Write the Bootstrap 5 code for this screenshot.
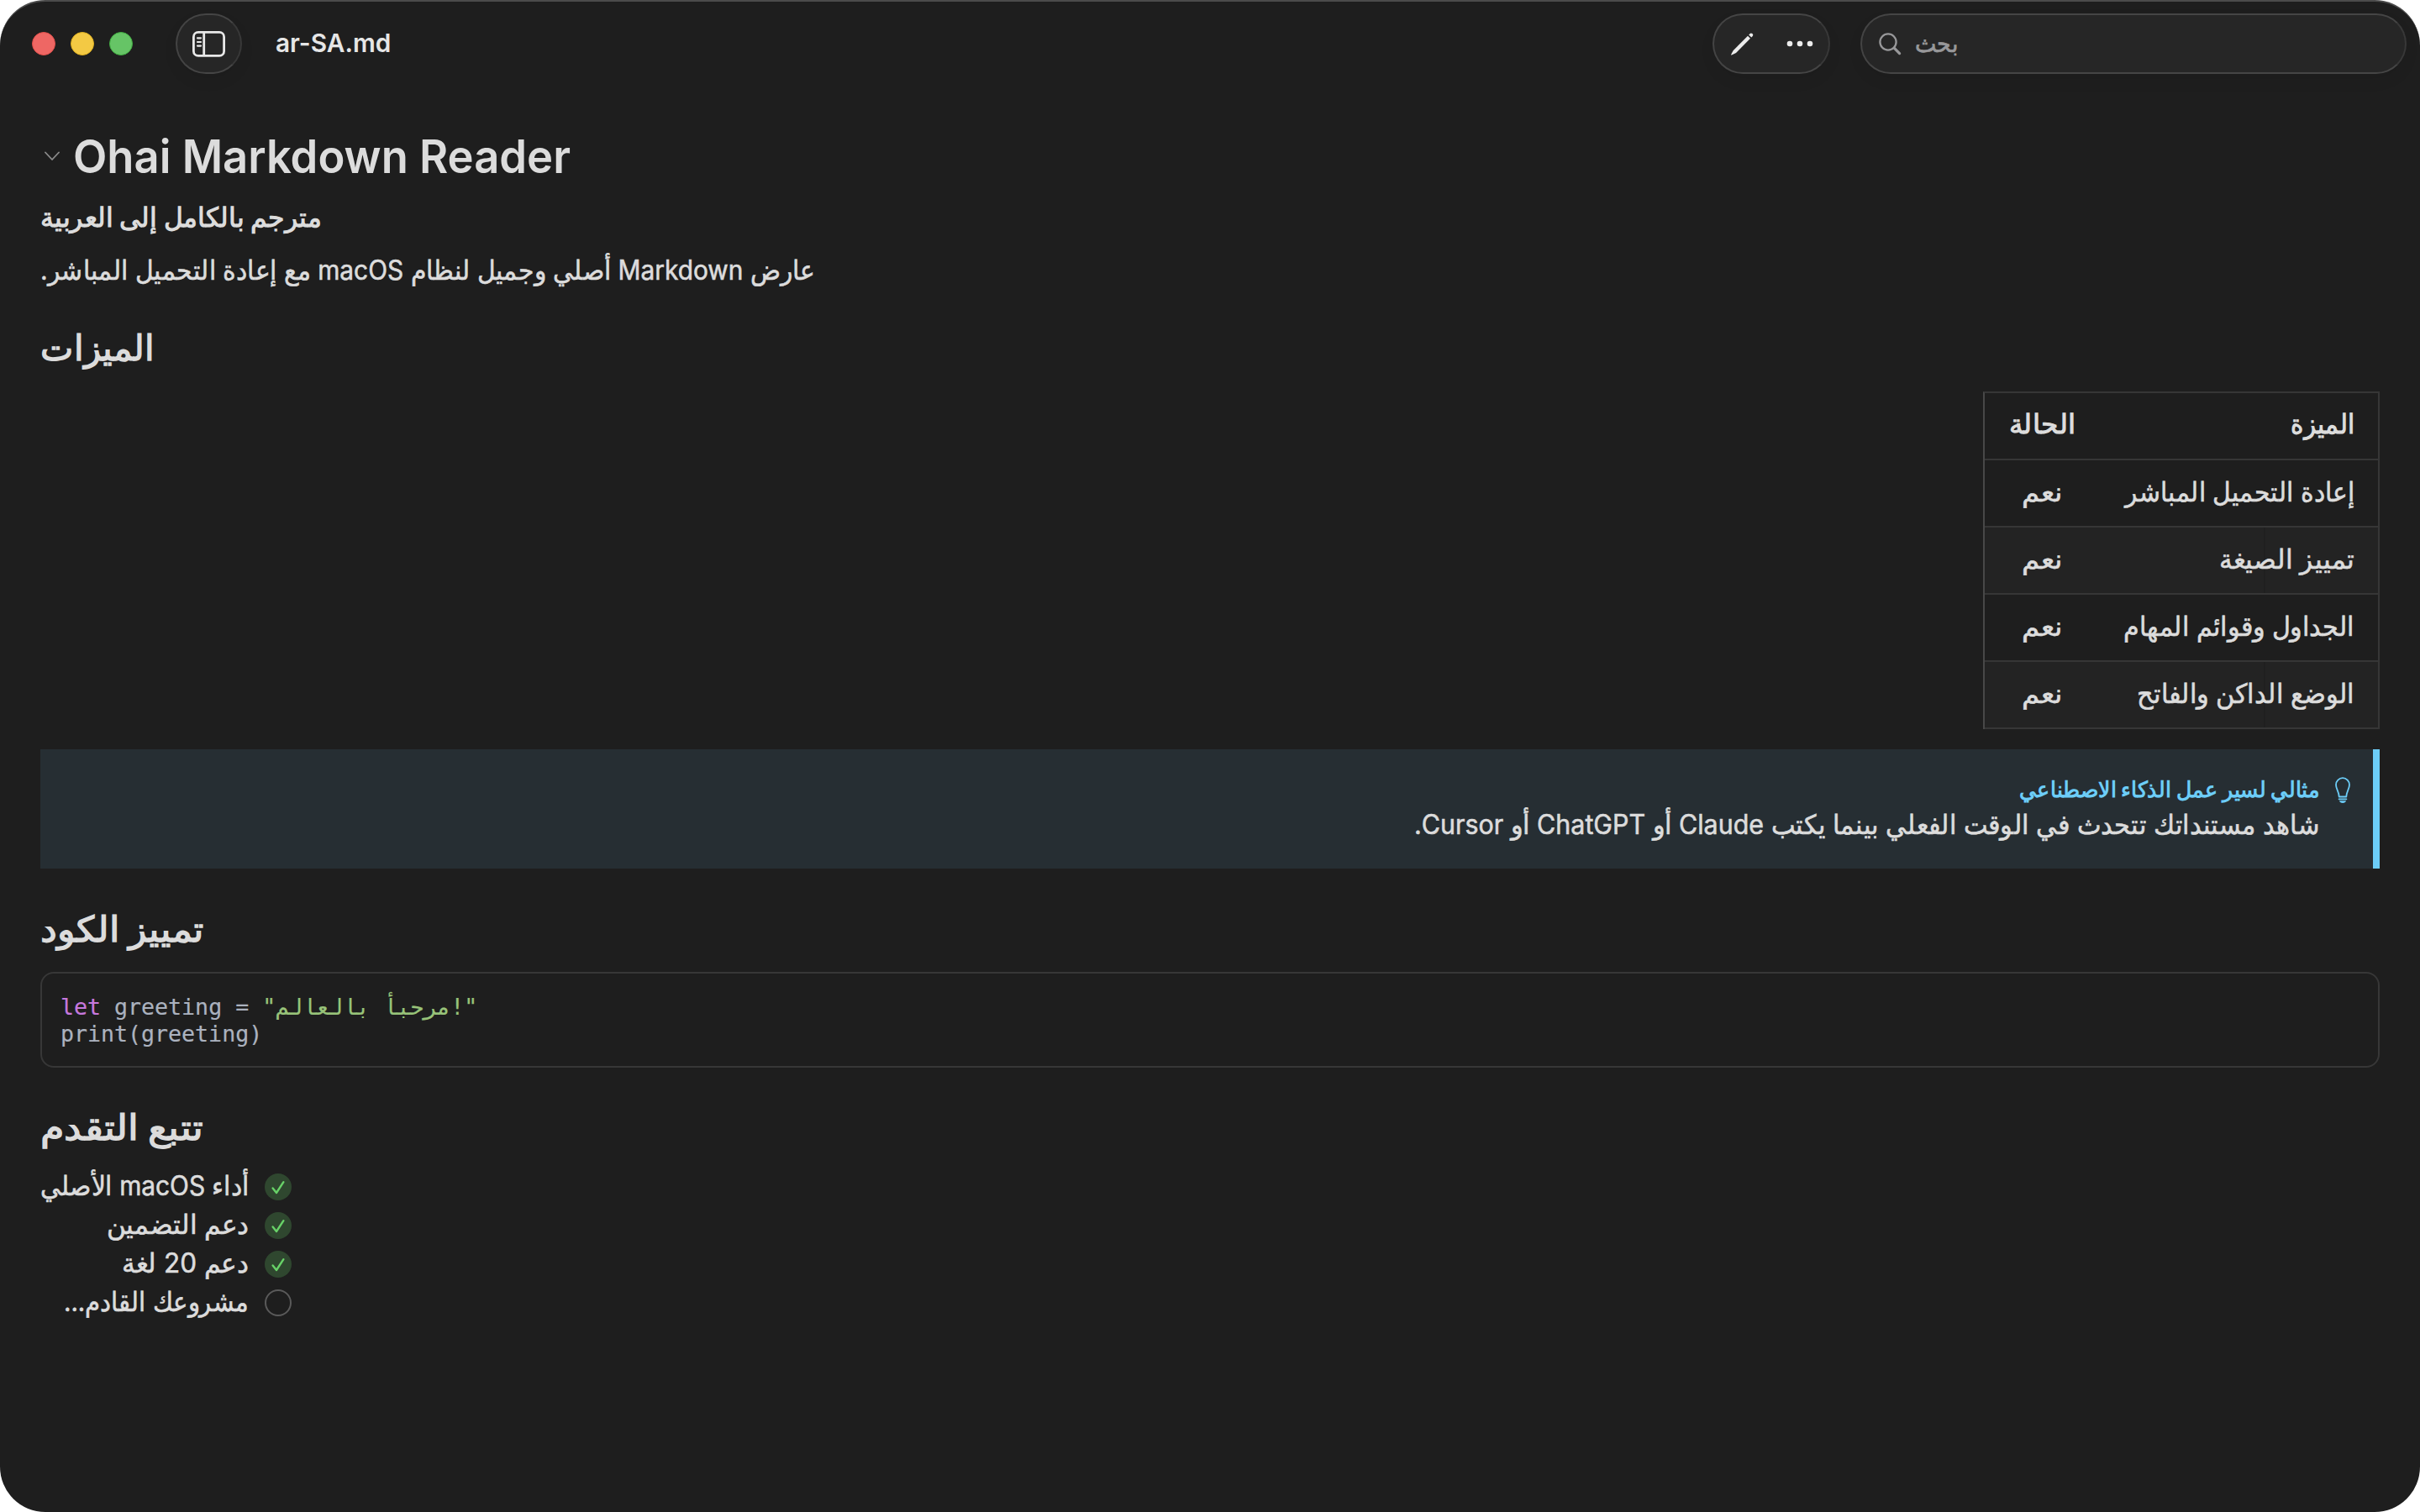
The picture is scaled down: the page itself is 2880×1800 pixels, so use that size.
<!DOCTYPE html>
<html lang="ar" data-bs-theme="dark">
<head>
<meta charset="utf-8">
<title>ar-SA.md</title>
<link href="https://cdn.jsdelivr.net/npm/bootstrap@5.3.0/dist/css/bootstrap.min.css" rel="stylesheet">
<style>
html, body { background: #fff; height: 1800px; overflow: hidden; }
body { font-family: Inter, "Liberation Sans", sans-serif; font-size: 32px; line-height: 40px; color: #dcdcdc; }
.app-window { height: 1800px; background: #1e1e1e; border-radius: 54px; border-top: 2px solid #4b4b4b; }
.titlebar { height: 102px; padding: 14px 16px 0 38px; }
.title-left { height: 72px; }
.lights { gap: 18px; }
.light { width: 28px; height: 28px; border-radius: 50%; }
.light-red { background: #ee6764; border: 1px solid #e24f4b; }
.light-yellow { background: #f3c944; border: 1px solid #dfb01f; }
.light-green { background: #66c466; border: 1px solid #41ae41; }
.glass { height: 72px; border-radius: 36px; background: #262626; border: 2px solid #3f3f3f; border-color: #454545 #383838 #454545 #444; box-shadow: 0 8px 18px rgba(0,0,0,.06); }
.glass-side { width: 79px; margin-left: 51px; }
.glass-tools { width: 140px; padding: 0 18px 0 19px; }
.glass-search { width: 650px; margin-left: 36px; padding-left: 19px; color: #98989a; font-size: 29px; }
.search-label { margin: 0 0 1px 14px; -webkit-text-stroke: .7px #98989a; }
.doc-name { font-size: 30px; font-weight: 600; color: #e6e6e6; margin-left: 40px; padding-bottom: 2px; }
.fit { display: inline-block; white-space: nowrap; transform-origin: left center; }
.fit[data-from="right"] { transform-origin: right center; }
.fit[data-from="center"] { transform-origin: center center; }
.doc { padding: 49px 48px 0; }
.doc h1, .doc h2 { color: #dcdcdc; }
.doc h1 { font-size: 55px; line-height: 66px; font-weight: 600; margin: 0; padding-left: 5px; }
.doc h1 svg { margin-right: 16px; }
.doc h2 { font-size: 42px; line-height: 52px; font-weight: 700; margin: 46px 0 0; }
.subtitle { font-weight: 700; margin: 20px 0 0; }
.intro, .features td, .tip-body, .task-text { -webkit-text-stroke: .6px #dcdcdc; }
.intro { margin: 23px 0 0; }
.doc .intro + h2 { margin-top: 46px; }
.features { width: 472px; margin: 26px 0 0 auto; border-collapse: separate; border-spacing: 0; border: 2px solid #363636; border-left-color: #484848; border-bottom: 0; table-layout: fixed; }
.features th, .features td { height: 80px; padding: 0 28px 4px; border-bottom: 2px solid #363636; vertical-align: middle; white-space: nowrap; }
.features td { padding-bottom: 3px; }
.features .state { width: 138px; padding-left: 0; padding-right: 0; text-align: center; }
.features .state .fit { margin-right: 2px; }
.features .striped td { background: #232323; }
.features .striped td:first-child { background: linear-gradient(#1f1f1f, #1f1f1f) 194px 0 / 2px 100% no-repeat #232323; }
.tip { margin-top: 24px; height: 142px; background: #262e33; border-right: 8px solid #6ccdf8; padding: 32px 26px 0 0; }
.tip-title { color: #6ccdf8; font-size: 26px; line-height: 32px; font-weight: 700; }
.tip-body { margin-top: 6px; }
.tip-icon { margin: 1px 0 0 17px; }
.code-box { margin: 25px 0 0; height: 114px; border: 2px solid #373737; border-radius: 16px; padding: 24px 22px 0; font: 26.6px/32px "DejaVu Sans Mono", monospace; color: #abb2bf; overflow: hidden; -webkit-text-stroke: .2px; }
.kw { color: #c678dd; }
.str { color: #98c379; }
.doc .code-box + h2 { margin-top: 45px; }
.tasks { margin: 22px 0 0; width: 299px; }
.tasks li { height: 46px; }
.task-text { width: 248px; padding-bottom: 2px; }
</style>
<script src="https://cdn.jsdelivr.net/npm/bootstrap@5.3.0/dist/js/bootstrap.bundle.min.js"></script>
</head>
<body>
<div class="app-window">
  <header class="titlebar d-flex align-items-start">
    <div class="title-left d-flex align-items-center">
      <div class="lights d-flex">
        <span class="light light-red"></span><span class="light light-yellow"></span><span class="light light-green"></span>
      </div>
      <div class="glass glass-side d-flex align-items-center justify-content-center">
        <svg width="40" height="32" viewBox="0 0 40 32" fill="none" stroke="#e8e8e8" stroke-width="2.8"><rect x="1.4" y="2.4" width="36.2" height="28" rx="5.5"/><path d="M13.7 2.4V30.4"/><path d="M6 9.3h4M6 14h4M6 18.6h4" stroke-width="2.2" stroke-linecap="round"/></svg>
      </div>
      <div class="doc-name"><span class="fit" data-w="137">ar-SA.md</span></div>
    </div>
    <div class="glass glass-tools d-flex align-items-center justify-content-between ms-auto">
      <svg width="30" height="30" viewBox="0 0 30 30" fill="#ececec"><path d="M21 5.8 24 8.8 7 26 1.8 28.4Q.8 28.8 1.2 27.8L3.8 22.9Z"/><path d="M22.2 4.4 23.7 2.9Q25 1.8 26.5 3.1T26.8 6L25.3 7.5Z"/></svg>
      <svg width="32" height="8" viewBox="0 0 32 8" fill="#ececec"><circle cx="4" cy="4" r="3.3"/><circle cx="16" cy="4" r="3.3"/><circle cx="28" cy="4" r="3.3"/></svg>
    </div>
    <div class="glass glass-search d-flex align-items-center">
      <svg width="30" height="30" viewBox="0 0 30 30" fill="none" stroke="#98989a" stroke-linecap="round"><circle cx="12" cy="13" r="9.6" stroke-width="2.3"/><path d="M19.2 20.2 25.6 26.6" stroke-width="3.2"/></svg>
      <div class="search-label"><span class="fit" dir="rtl" data-w="51">بحث</span></div>
    </div>
  </header>

  <main class="doc">
    <h1 class="d-flex align-items-center"><svg width="18" height="12" viewBox="0 0 18 12" fill="none" stroke="#8c8c8c" stroke-width="1.8" stroke-linecap="round" stroke-linejoin="round"><path d="M1 1.5 9 10 17 1.5"/></svg><span class="fit" data-w="592">Ohai Markdown Reader</span></h1>
    <p class="subtitle"><span class="fit" dir="rtl" data-w="335">مترجم بالكامل إلى العربية</span></p>
    <p class="intro"><span class="fit" dir="rtl" data-w="922">عارض Markdown أصلي وجميل لنظام macOS مع إعادة التحميل المباشر.</span></p>
    <h2><span class="fit" dir="rtl" data-w="136">الميزات</span></h2>

    <table class="features" dir="rtl">
      <tr><th><span class="fit" data-from="right" data-w="76">الميزة</span></th><th class="state"><span class="fit" data-from="center" data-w="79">الحالة</span></th></tr>
      <tr><td><span class="fit" data-from="right" data-w="273">إعادة التحميل المباشر</span></td><td class="state"><span class="fit" data-from="center" data-w="48">نعم</span></td></tr>
      <tr class="striped"><td><span class="fit" data-from="right" data-w="161">تمييز الصيغة</span></td><td class="state"><span class="fit" data-from="center" data-w="48">نعم</span></td></tr>
      <tr><td><span class="fit" data-from="right" data-w="275">الجداول وقوائم المهام</span></td><td class="state"><span class="fit" data-from="center" data-w="48">نعم</span></td></tr>
      <tr class="striped"><td><span class="fit" data-from="right" data-w="259">الوضع الداكن والفاتح</span></td><td class="state"><span class="fit" data-from="center" data-w="48">نعم</span></td></tr>
    </table>

    <section class="tip d-flex justify-content-end">
      <div class="text-end">
        <div class="tip-title"><span class="fit" dir="rtl" data-from="right" data-w="358">مثالي لسير عمل الذكاء الاصطناعي</span></div>
        <div class="tip-body"><span class="fit" dir="rtl" data-from="right" data-w="1078">شاهد مستنداتك تتحدث في الوقت الفعلي بينما يكتب Claude أو ChatGPT أو Cursor.</span></div>
      </div>
      <svg class="tip-icon" width="20" height="32" viewBox="0 0 20 32" fill="none" stroke="#6ccdf8" stroke-width="1.8" stroke-linejoin="round"><path d="M5.7 23.5C5.6 17.5 2 14.5 2 9.2a8 8 0 0 1 16 0c0 5.3-3.6 8.3-3.7 14.3Z"/><path d="M5.6 26.3h8.8" stroke-linecap="round"/><path d="M6 28.3h8Q13.3 31 10 31T6 28.3Z" fill="#6ccdf8" stroke="none"/></svg>
    </section>

    <h2><span class="fit" dir="rtl" data-w="195">تمييز الكود</span></h2>
    <pre class="code-box"><span class="kw">let</span> greeting = <span class="str">"مرحبأ بالعالم!"</span>
print(greeting)</pre>

    <h2><span class="fit" dir="rtl" data-w="194">تتبع التقدم</span></h2>
    <ul class="tasks list-unstyled">
      <li class="d-flex align-items-center justify-content-between"><div class="task-text" dir="rtl"><span class="fit" data-from="right" data-w="248">أداء macOS الأصلي</span></div><svg width="32" height="32" viewBox="0 0 32 32" fill="none"><circle cx="16" cy="16" r="16" fill="#2f472f"/><path d="M9.6 17.4 14 23 22.4 10.2" stroke="#68d268" stroke-width="2.4" stroke-linecap="round" stroke-linejoin="round"/></svg></li>
      <li class="d-flex align-items-center justify-content-between"><div class="task-text" dir="rtl"><span class="fit" data-from="right" data-w="169">دعم التضمين</span></div><svg width="32" height="32" viewBox="0 0 32 32" fill="none"><circle cx="16" cy="16" r="16" fill="#2f472f"/><path d="M9.6 17.4 14 23 22.4 10.2" stroke="#68d268" stroke-width="2.4" stroke-linecap="round" stroke-linejoin="round"/></svg></li>
      <li class="d-flex align-items-center justify-content-between"><div class="task-text" dir="rtl"><span class="fit" data-from="right" data-w="151">دعم 20 لغة</span></div><svg width="32" height="32" viewBox="0 0 32 32" fill="none"><circle cx="16" cy="16" r="16" fill="#2f472f"/><path d="M9.6 17.4 14 23 22.4 10.2" stroke="#68d268" stroke-width="2.4" stroke-linecap="round" stroke-linejoin="round"/></svg></li>
      <li class="d-flex align-items-center justify-content-between"><div class="task-text" dir="rtl"><span class="fit" data-from="right" data-w="220">مشروعك القادم...</span></div><svg width="32" height="32" viewBox="0 0 32 32" fill="none"><circle cx="16" cy="16" r="15" stroke="#5a5a5a" stroke-width="2"/></svg></li>
    </ul>
  </main>
</div>
<script>
// Condense each label to its set width
document.querySelectorAll('.fit').forEach(el => {
  el.style.transform = 'scaleX(' + (el.dataset.w / el.offsetWidth).toFixed(4) + ')';
});
</script>
</body>
</html>
